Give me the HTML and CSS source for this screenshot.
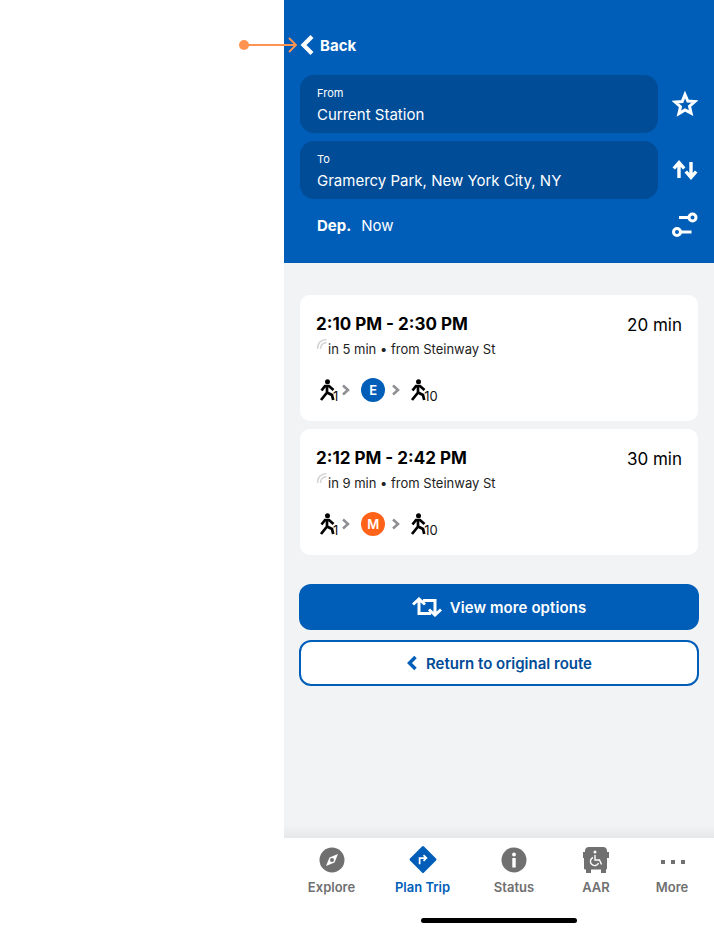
FILE: index.html
```html
<!DOCTYPE html>
<html lang="en">
<head>
  <meta charset="UTF-8" />
  <meta name="viewport" content="width=device-width, initial-scale=1.0" />
  <title>Plan Trip</title>
  <link rel="stylesheet" href="styles.css">
</head>
<body>
  <div class="canvas">
    <div class="phone">
      <!-- header -->
      <header class="top">
        <div class="back-row">
          <svg width="14" height="20" viewBox="0 0 14 20"><path d="M12 1.500 3.500 10l8.500 8.500" fill="none" stroke="#fff" stroke-width="4.200"/></svg>
          <span>Back</span>
        </div>
        <div class="field-row">
          <div class="field">
            <div class="field-label">From</div>
            <div class="field-value">Current Station</div>
          </div>
          <svg class="side-icon" width="26" height="26" viewBox="0 0 26 26"><path d="M13 3.500l2.800 6.500 7 .6-5.300 4.600 1.600 6.900L13 18.900l-6.100 3.700 1.600-6.900-5.300-4.600 7-.6z" fill="none" stroke="#fff" stroke-width="3" stroke-linejoin="miter"/></svg>
        </div>
        <div class="field-row">
          <div class="field">
            <div class="field-label">To</div>
            <div class="field-value">Gramercy Park, New York City, NY</div>
          </div>
          <svg class="side-icon" width="26" height="26" viewBox="0 0 26 26"><path d="M7 21V6M1.800 11.500 7 5.500l5.200 6M19 5v15M13.800 14.500l5.200 6 5.200-6" fill="none" stroke="#fff" stroke-width="3.400"/></svg>
        </div>
        <div class="dep-row">
          <div class="dep"><b>Dep.</b><span>Now</span></div>
          <svg class="side-icon" width="26" height="26" viewBox="0 0 26 26"><g fill="none" stroke="#fff" stroke-width="3"><circle cx="20.500" cy="5.500" r="3.500"/><circle cx="5" cy="20" r="3.500"/><path d="M17 5.500H7M8.500 20h11"/></g></svg>
        </div>
      </header>

      <main class="content">
        <div class="card">
          <div class="card-head">
            <div class="times">2:10 PM - 2:30 PM</div>
            <div class="duration">20 min</div>
          </div>
          <div class="card-sub">
            <svg class="live" width="12" height="12" viewBox="0 0 12 12"><path d="M1.500 11C1.500 5.500 5 2 10.500 1.500M4.500 11C4.500 7.500 7 5 10.500 4.500" fill="none" stroke="#d4d4d4" stroke-width="1.500"/></svg>
            <span>in 5 min • from Steinway St</span>
          </div>
          <div class="legs">
            <svg class="walker" width="17" height="22" viewBox="0 0 17 22"><circle cx="8.500" cy="2.800" r="2.500" fill="#000"/><path d="M2.500 11.500 6 7h4l4.500 4M8 7v6.500L2 21M8 13.500l5 2.500 1.200 5" fill="none" stroke="#000" stroke-width="2.700"/></svg>
            <span class="leg-num">1</span>
            <svg class="sep" width="10" height="12" viewBox="0 0 10 12"><path d="M2 1.500 7 6l-5 4.500" fill="none" stroke="#8e8e93" stroke-width="2.500"/></svg>
            <span class="line-badge line-e">E</span>
            <svg class="sep" width="10" height="12" viewBox="0 0 10 12"><path d="M2 1.500 7 6l-5 4.500" fill="none" stroke="#8e8e93" stroke-width="2.500"/></svg>
            <svg class="walker" width="17" height="22" viewBox="0 0 17 22"><circle cx="8.500" cy="2.800" r="2.500" fill="#000"/><path d="M2.500 11.500 6 7h4l4.500 4M8 7v6.500L2 21M8 13.500l5 2.500 1.200 5" fill="none" stroke="#000" stroke-width="2.700"/></svg>
            <span class="leg-num">10</span>
          </div>
        </div>

        <div class="card">
          <div class="card-head">
            <div class="times">2:12 PM - 2:42 PM</div>
            <div class="duration">30 min</div>
          </div>
          <div class="card-sub">
            <svg class="live" width="12" height="12" viewBox="0 0 12 12"><path d="M1.500 11C1.500 5.500 5 2 10.500 1.500M4.500 11C4.500 7.500 7 5 10.500 4.500" fill="none" stroke="#d4d4d4" stroke-width="1.500"/></svg>
            <span>in 9 min • from Steinway St</span>
          </div>
          <div class="legs">
            <svg class="walker" width="17" height="22" viewBox="0 0 17 22"><circle cx="8.500" cy="2.800" r="2.500" fill="#000"/><path d="M2.500 11.500 6 7h4l4.500 4M8 7v6.500L2 21M8 13.500l5 2.500 1.200 5" fill="none" stroke="#000" stroke-width="2.700"/></svg>
            <span class="leg-num">1</span>
            <svg class="sep" width="10" height="12" viewBox="0 0 10 12"><path d="M2 1.500 7 6l-5 4.500" fill="none" stroke="#8e8e93" stroke-width="2.500"/></svg>
            <span class="line-badge line-m">M</span>
            <svg class="sep" width="10" height="12" viewBox="0 0 10 12"><path d="M2 1.500 7 6l-5 4.500" fill="none" stroke="#8e8e93" stroke-width="2.500"/></svg>
            <svg class="walker" width="17" height="22" viewBox="0 0 17 22"><circle cx="8.500" cy="2.800" r="2.500" fill="#000"/><path d="M2.500 11.500 6 7h4l4.500 4M8 7v6.500L2 21M8 13.500l5 2.500 1.200 5" fill="none" stroke="#000" stroke-width="2.700"/></svg>
            <span class="leg-num">10</span>
          </div>
        </div>

        <div class="actions">
          <button class="btn btn-solid">
            <svg width="30" height="20" viewBox="0 0 30 20"><path d="M1 7.500 7 2l6 5.500M7 3v13.500h12M29 12.500 23 18l-6-5.500M23 17V3.500H11" fill="none" stroke="#fff" stroke-width="3"/></svg>
            <span>View more options</span>
          </button>
          <button class="btn btn-outline">
            <svg width="12" height="16" viewBox="0 0 12 16"><path d="M9.500 2 3.500 8l6 6" fill="none" stroke="#005eb8" stroke-width="3.500"/></svg>
            <span>Return to original route</span>
          </button>
        </div>
      </main>

      <!-- bottom tabs -->
      <nav class="tabs">
        <div class="tab">
          <svg width="26" height="26" viewBox="0 0 26 26"><circle cx="13" cy="13" r="12.500" fill="#707070"/><path d="M19 7l-3.500 8.500L7 19l3.500-8.500z" fill="#fff"/><circle cx="13" cy="13" r="2" fill="#707070"/></svg>
          <span>Explore</span>
        </div>
        <div class="tab active">
          <svg width="30" height="30" viewBox="0 0 30 30"><rect x="4.750" y="4.750" width="20.500" height="20.500" rx="1.500" transform="rotate(45 15 15)" fill="#005eb8"/><path d="M11.500 20v-6.500h7M15.500 10.500l3 3-3 3" fill="none" stroke="#fff" stroke-width="1.800"/></svg>
          <span>Plan Trip</span>
        </div>
        <div class="tab">
          <svg width="26" height="26" viewBox="0 0 26 26"><circle cx="13" cy="13" r="12.500" fill="#707070"/><circle cx="13" cy="7.500" r="1.900" fill="#fff"/><rect x="11.300" y="11" width="3.400" height="9.500" fill="#fff"/></svg>
          <span>Status</span>
        </div>
        <div class="tab">
          <svg width="26" height="26" viewBox="0 0 26 26"><path d="M6 0h14c2.500 0 4 1.500 4 4v1h2v6h-2v10c0 1-.5 1.500-1.500 1.500H23V26h-5v-3.500H8V26H3v-3.500h-.5C1.500 22.500 1 22 1 21V11H0V5h2V4c0-2.500 1.500-4 4-4z" fill="#707070"/><g fill="none" stroke="#fff" stroke-width="1.400"><circle cx="12" cy="5" r=".8"/><path d="M12 8v5h4.500l2 4.500"/><path d="M10 10.500a4.200 4.200 0 1 0 5.500 5.500"/></g></svg>
          <span>AAR</span>
        </div>
        <div class="tab">
          <svg width="26" height="26" viewBox="0 0 26 26"><g fill="#707070"><rect x="2" y="13" width="4" height="4"/><rect x="12" y="13" width="4" height="4"/><rect x="22" y="13" width="4" height="4"/></g></svg>
          <span>More</span>
        </div>
      </nav>
      <div class="home-bar"><div class="home-pill"></div></div>
    </div>

    <!-- prototype arrow -->
    <svg class="proto-arrow" width="62" height="20" viewBox="0 0 62 20"><circle cx="5" cy="10" r="5" fill="#ff9452"/><path d="M5 10h52M50 3l7 7-7 7" fill="none" stroke="#ff9452" stroke-width="1.800"/></svg>
  </div>
</body>
</html>
```

FILE: styles.css
```css
* {
  box-sizing: border-box;
}

body {
  margin: 0;
  background: #fff;
  font-family: 'Inter', 'Liberation Sans', sans-serif;
}

.canvas {
  position: relative;
  width: 714px;
  height: 932px;
  padding-left: 284px;
  overflow: hidden;
}

.proto-arrow {
  position: absolute;
  left: 239px;
  top: 35px;
}

.phone {
  width: 430px;
  height: 932px;
  display: flex;
  flex-direction: column;
  background: linear-gradient(to bottom, #f2f3f5 0, #f2f3f5 825px, #e6e7e9 838px);
}

/* header */
.top {
  height: 263px;
  flex-shrink: 0;
  padding: 34px 16px 0;
  background: #005eb8;
  color: #fff;
}

.back-row {
  display: flex;
  align-items: center;
  gap: 6px;
  height: 22px;
  margin-bottom: 19px;
  font-size: 15px;
  font-weight: 700;
}

.field-row {
  display: flex;
  align-items: center;
  justify-content: space-between;
  margin-bottom: 8px;
}

.field {
  width: 358px;
  height: 58px;
  padding: 12px 17px 0;
  border-radius: 14px;
  background: #004c97;
}

.field-label {
  font-size: 11px;
  line-height: 13px;
  margin-bottom: 5px;
}

.field-value {
  font-size: 15px;
  line-height: 20px;
}

.dep-row {
  display: flex;
  align-items: center;
  justify-content: space-between;
  margin-top: 13px;
  padding-left: 17px;
}

.dep {
  display: flex;
  gap: 10px;
  font-size: 15px;
}

/* results */
.content {
  flex: 1;
  padding: 32px 16px 0;
}

.card {
  height: 126px;
  margin-bottom: 8px;
  padding: 19px 16px 0;
  border-radius: 10px;
  background: #fff;
  color: #000;
}

.card-head {
  display: flex;
  justify-content: space-between;
  align-items: center;
  height: 20px;
}

.times {
  font-size: 17px;
  font-weight: 700;
}

.duration {
  padding-top: 2px;
  font-size: 17px;
}

.card-sub {
  position: relative;
  margin-top: 6px;
  padding-left: 12px;
  font-size: 13px;
  line-height: 18px;
  color: #222;
}

.live {
  position: absolute;
  left: 0;
  top: -2px;
}

.legs {
  display: flex;
  align-items: center;
  height: 26px;
  margin: 19px 0 0 3px;
}

.leg-num {
  align-self: flex-end;
  font-size: 13px;
  line-height: 14px;
  margin-left: -3px;
  color: #111;
}

.sep {
  margin: 0 4px 0 3px;
}

.line-badge {
  width: 24px;
  height: 24px;
  margin: 0 3px 0 6px;
  border-radius: 50%;
  color: #fff;
  font-size: 13px;
  font-weight: 600;
  line-height: 24px;
  text-align: center;
}

.line-badge + .sep {
  margin-right: 9px;
}

.line-e { background: #005eb8; }
.line-m { background: #ff6319; }

.actions {
  margin: 29px 0 0 -1px;
  display: flex;
  flex-direction: column;
  gap: 10px;
}

.btn {
  display: flex;
  align-items: center;
  justify-content: center;
  gap: 8px;
  width: 400px;
  height: 46px;
  padding-bottom: 1px;
  border-radius: 12px;
  font-family: inherit;
  font-size: 15px;
  font-weight: 600;
}

.btn-solid {
  border: none;
  background: #005eb8;
  color: #fff;
  letter-spacing: .1px;
}

.btn-outline {
  border: 2px solid #005eb8;
  background: #fff;
  color: #004c97;
}

/* tabs */
.tabs {
  display: grid;
  grid-template-columns: 95px 87px 96px 68px 84px;
  height: 68px;
  flex-shrink: 0;
  padding-top: 7px;
  background: #fff;
}

.tab {
  display: flex;
  flex-direction: column;
  align-items: center;
  justify-content: flex-end;
  height: 50px;
  font-size: 13px;
  font-weight: 600;
  color: #707070;
}

.tab span {
  margin-top: 6px;
}

.tab.active {
  color: #005eb8;
}

.tab.active span {
  margin-top: 5px;
}

.home-bar {
  flex-shrink: 0;
  height: 26px;
  background: #fff;
  padding-top: 12px;
}

.home-pill {
  width: 156px;
  height: 5px;
  margin: 0 auto;
  border-radius: 3px;
  background: #000;
}
```
